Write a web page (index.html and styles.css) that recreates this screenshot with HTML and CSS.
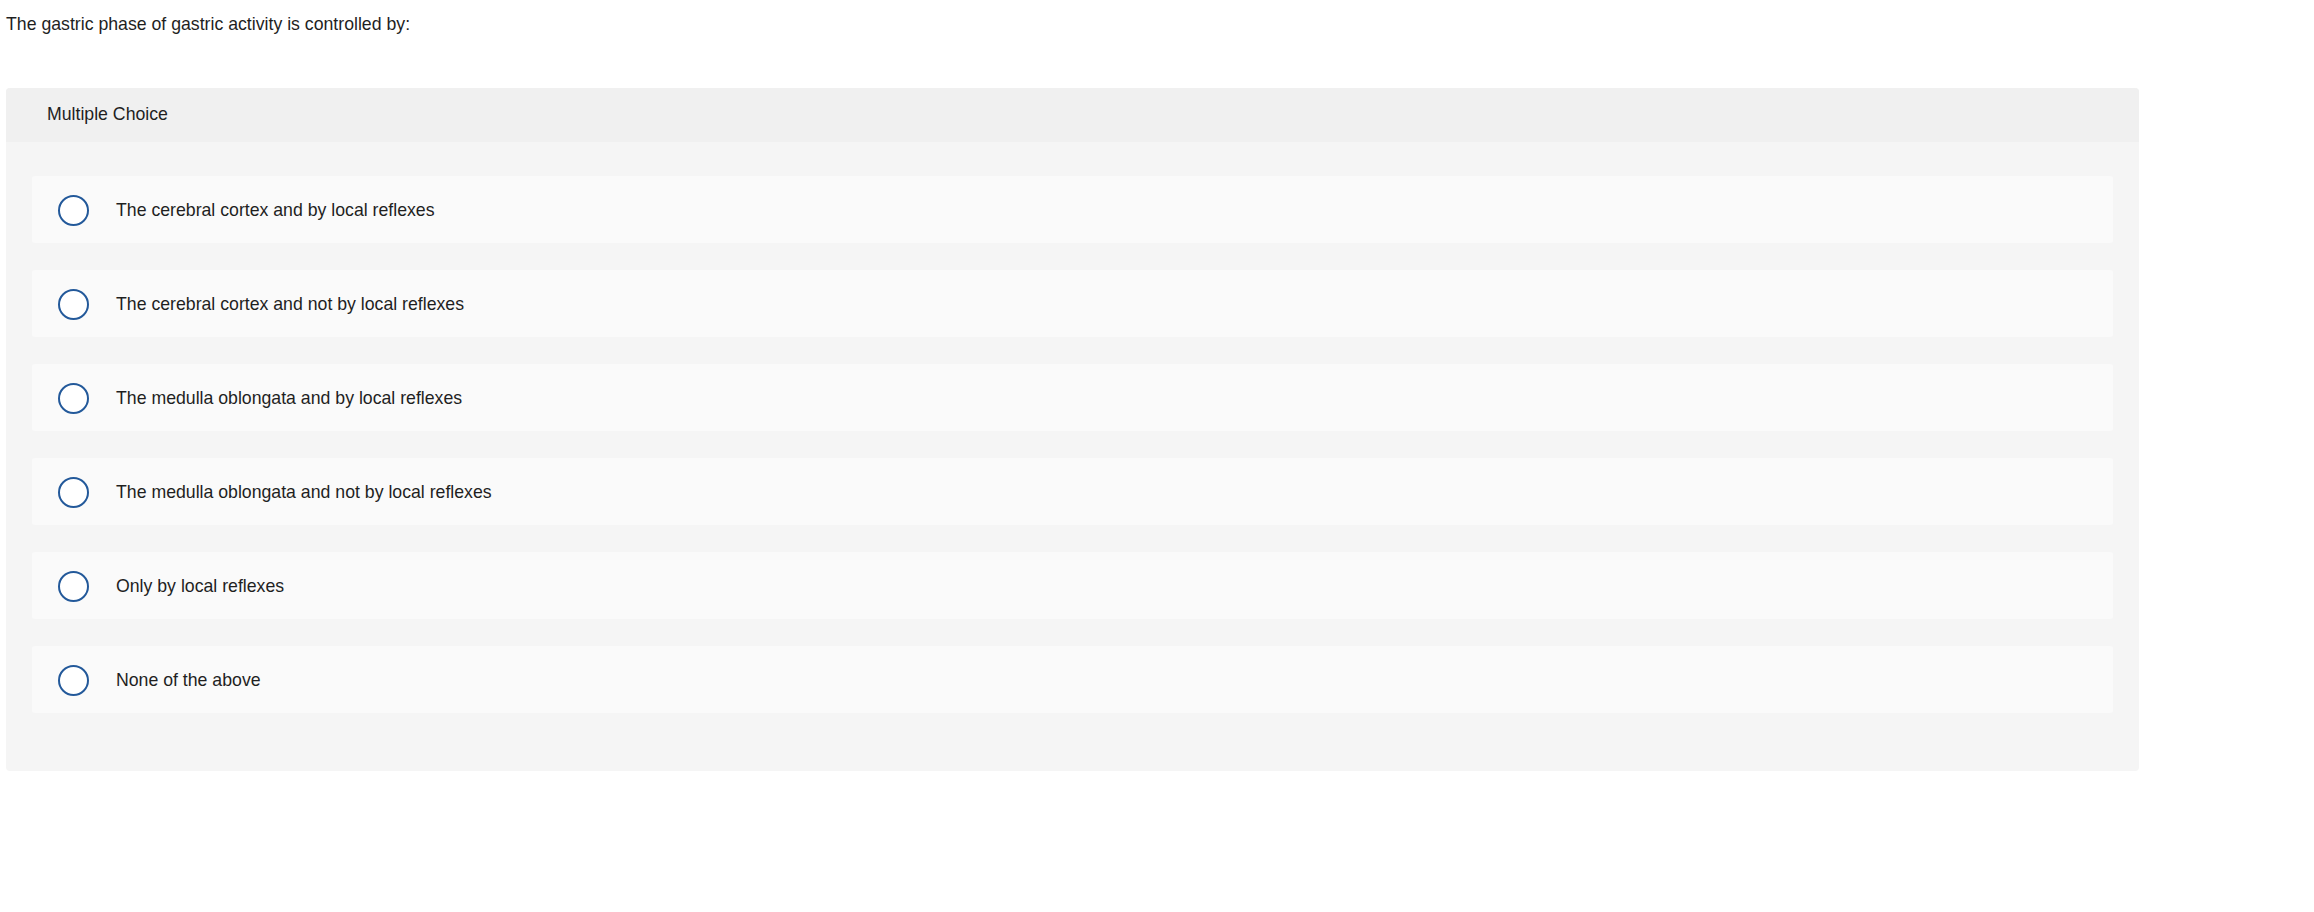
FILE: index.html
```html
<!DOCTYPE html>
<html lang="en">
<head>
    <meta charset="UTF-8">
    <meta name="viewport" content="width=device-width, initial-scale=1.0">
    <title>Question</title>
    <link rel="stylesheet" href="styles.css">
</head>
<body>
    <div class="page">
        <p class="prompt">The gastric phase of gastric activity is controlled by:</p>

        <div class="question">
            <div class="question-header">Multiple Choice</div>

            <div class="choices">
                <label class="choice">
                    <input type="radio" name="answer">
                    <span>The cerebral cortex and by local reflexes</span>
                </label>
                <label class="choice">
                    <input type="radio" name="answer">
                    <span>The cerebral cortex and not by local reflexes</span>
                </label>
                <label class="choice">
                    <input type="radio" name="answer">
                    <span>The medulla oblongata and by local reflexes</span>
                </label>
                <label class="choice">
                    <input type="radio" name="answer">
                    <span>The medulla oblongata and not by local reflexes</span>
                </label>
                <label class="choice">
                    <input type="radio" name="answer">
                    <span>Only by local reflexes</span>
                </label>
                <label class="choice">
                    <input type="radio" name="answer">
                    <span>None of the above</span>
                </label>
            </div>
        </div>
    </div>
</body>
</html>
```

FILE: styles.css
```css
body {
    margin: 0;
    background-color: #fff;
    color: #1f1f1f;
    font-family: "Liberation Sans", Arial, sans-serif;
    font-size: 17.7px;
    line-height: 25px;
}
.page {
    padding: 12px 6px;
}
.prompt {
    margin: 0 0 51px 0;
}
.question {
    width: 2133px;
    background-color: #f5f5f5;
    border-radius: 4px;
    overflow: hidden;
}
.question-header {
    background-color: #f0f0f0;
    padding: 14px 0 15px 41px;
}
.choices {
    display: flex;
    flex-direction: column;
    gap: 27px;
    padding: 34px 26px 58px;
}
.choice {
    display: flex;
    align-items: center;
    gap: 27px;
    height: 67px;
    padding-left: 26px;
    background-color: #fafafa;
    border-radius: 3px;
    cursor: pointer;
}
.choice span {
    padding-top: 2px;
}
.choice input {
    appearance: none;
    -webkit-appearance: none;
    margin: 2px 0 0 0;
    width: 31px;
    height: 31px;
    border: 2px solid #23599a;
    border-radius: 50%;
    background-color: #fff;
    cursor: pointer;
}
.choice input:checked {
    background-color: #23599a;
    box-shadow: inset 0 0 0 5px #fff;
}
```
